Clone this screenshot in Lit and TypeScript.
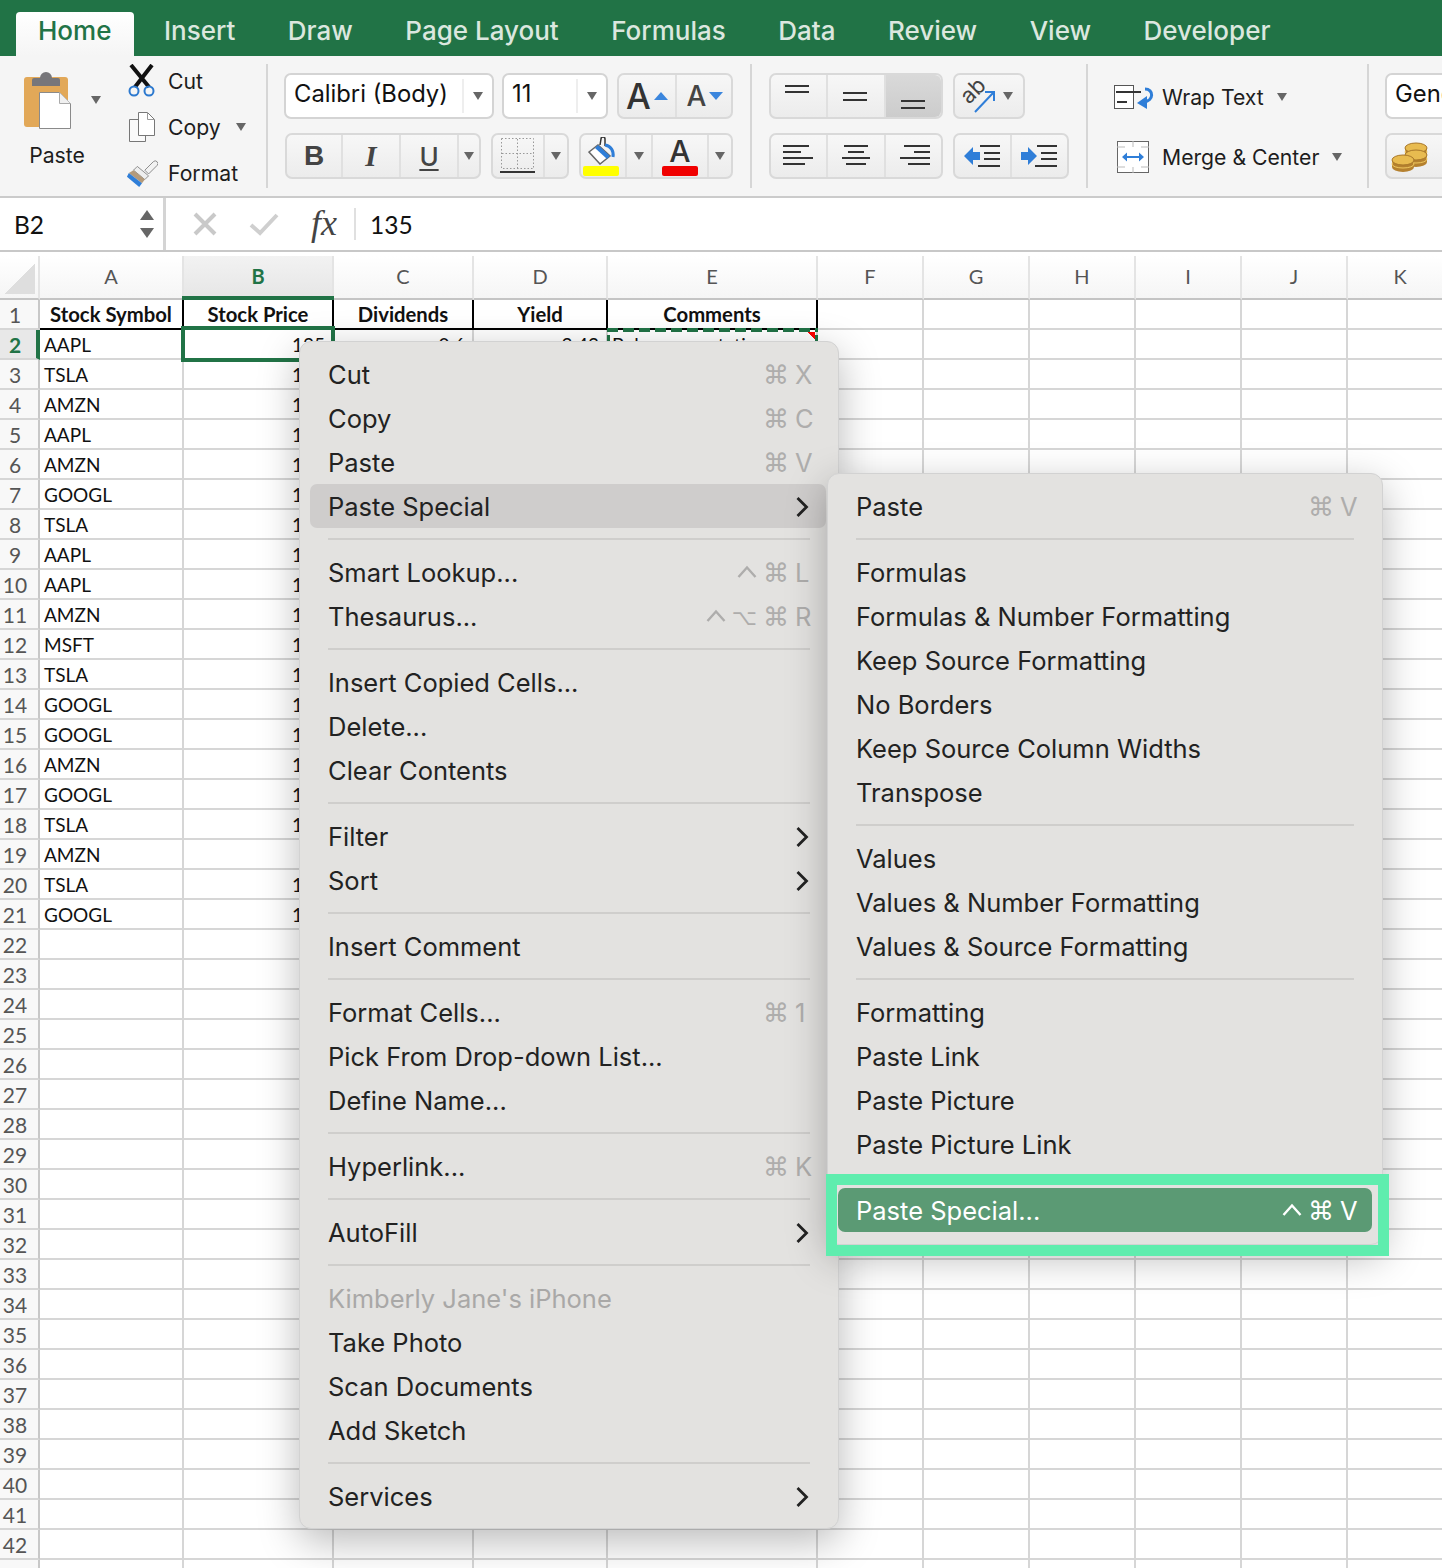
import { LitElement, html, css, svg } from "lit";
import { customElement } from "lit/decorators.js";

type Item = { t?: string; k?: string[]; arrow?: boolean; hover?: boolean; dis?: boolean; sel?: boolean; sep?: boolean };

const SEP: Item = { sep: true };

const mainMenu: Item[] = [
  { t: "Cut", k: ["⌘", "X"] },
  { t: "Copy", k: ["⌘", "C"] },
  { t: "Paste", k: ["⌘", "V"] },
  { t: "Paste Special", arrow: true, hover: true },
  SEP,
  { t: "Smart Lookup...", k: ["^", "⌘", "L"] },
  { t: "Thesaurus...", k: ["^", "⌥", "⌘", "R"] },
  SEP,
  { t: "Insert Copied Cells..." },
  { t: "Delete..." },
  { t: "Clear Contents" },
  SEP,
  { t: "Filter", arrow: true },
  { t: "Sort", arrow: true },
  SEP,
  { t: "Insert Comment" },
  SEP,
  { t: "Format Cells...", k: ["⌘", "1"] },
  { t: "Pick From Drop-down List..." },
  { t: "Define Name..." },
  SEP,
  { t: "Hyperlink...", k: ["⌘", "K"] },
  SEP,
  { t: "AutoFill", arrow: true },
  SEP,
  { t: "Kimberly Jane's iPhone", dis: true },
  { t: "Take Photo" },
  { t: "Scan Documents" },
  { t: "Add Sketch" },
  SEP,
  { t: "Services", arrow: true },
];

const subMenu: Item[] = [
  { t: "Paste", k: ["⌘", "V"] },
  SEP,
  { t: "Formulas" },
  { t: "Formulas & Number Formatting" },
  { t: "Keep Source Formatting" },
  { t: "No Borders" },
  { t: "Keep Source Column Widths" },
  { t: "Transpose" },
  SEP,
  { t: "Values" },
  { t: "Values & Number Formatting" },
  { t: "Values & Source Formatting" },
  SEP,
  { t: "Formatting" },
  { t: "Paste Link" },
  { t: "Paste Picture" },
  { t: "Paste Picture Link" },
  SEP,
  { t: "Paste Special...", k: ["^", "⌘", "V"], sel: true },
];

const symbols = ["AAPL", "TSLA", "AMZN", "AAPL", "AMZN", "GOOGL", "TSLA", "AAPL", "AAPL", "AMZN", "MSFT", "TSLA", "GOOGL", "GOOGL", "AMZN", "GOOGL", "TSLA", "AMZN", "TSLA", "GOOGL"];
const prices = ["135", "148", "112", "126", "131", "154", "119", "142", "137", "128", "116", "151", "133", "145", "122", "139", "127", "", "143", "118"];
const tabs = ["Home", "Insert", "Draw", "Page Layout", "Formulas", "Data", "Review", "View", "Developer"];
const cols = ["A", "B", "C", "D", "E", "F", "G", "H", "I", "J", "K"];
const heads = ["Stock Symbol", "Stock Price", "Dividends", "Yield", "Comments"];

const lines = (ys: number[][]) => html`<svg width="36" height="30" viewBox="0 0 36 30">
  ${ys.map(([x1, x2, y]) => svg`<rect x=${x1} y=${y} width=${x2 - x1} height="2" fill="#333"></rect>`)}
</svg>`;

const pasteIcon = html`<svg width="48" height="60" viewBox="0 0 48 60">
  <rect x="0" y="7" width="44" height="50" rx="3" fill="#e2a858"></rect>
  <path d="M8 16 v-6 a2 2 0 0 1 2 -2 h6 a6 6 0 0 1 12 0 h6 a2 2 0 0 1 2 2 v6z" fill="#77767a"></path>
  <path d="M15.500 22.500 h20 l11 11 v25 h-31z" fill="#fff" stroke="#8a8a8a"></path>
  <path d="M35.500 22.500 v11 h11" fill="#f0f0f0" stroke="#aaa"></path>
</svg>`;
const scissors = html`<svg width="30" height="34" viewBox="0 0 30 34">
  <path d="M4 1 L22 23 M25 1 L8 23" stroke="#111" stroke-width="4" fill="none"></path>
  <circle cx="7" cy="27" r="4.500" fill="none" stroke="#2c79cf" stroke-width="2"></circle>
  <circle cx="22" cy="27" r="4.500" fill="none" stroke="#2c79cf" stroke-width="2"></circle>
</svg>`;
const copyIcon = html`<svg width="28" height="32" viewBox="0 0 28 32">
  <path d="M1.500 8.500 h11 l5 5 v17 h-16z" fill="#fafafa" stroke="#777"></path>
  <path d="M10.500 1.500 h9 l7 7 v16 h-16z" fill="#fff" stroke="#777"></path>
  <path d="M19.500 1.500 v7 h7" fill="none" stroke="#999"></path>
</svg>`;
const brush = html`<svg width="34" height="30" viewBox="0 0 34 30">
  <path d="M20 12 L29 3 a2.500 2.500 0 0 1 4 4 L24 16z" fill="#f2f2f2" stroke="#888"></path>
  <path d="M12 8 L24 18 L20 22 L8 12z" fill="#eee" stroke="#888"></path>
  <path d="M8 12 L20 22 L17 26 L3 15z" fill="#b39a7b"></path>
  <path d="M3 15 L17 26 L14 30 L1 19 z" fill="#2f7ed8"></path>
</svg>`;
const bordersIcon = html`<svg width="36" height="38" viewBox="0 0 36 38">
  <g stroke="#999" stroke-width="1" stroke-dasharray="1.500 2" fill="none">
    <rect x="1.500" y="1.500" width="32" height="30"></rect>
    <path d="M17.500 2 v30 M2 16.500 h32"></path>
  </g>
  <rect x="0" y="34" width="35" height="2" fill="#333"></rect>
</svg>`;
const bucket = html`<svg width="30" height="28" viewBox="0 0 30 28">
  <path d="M3 15 L12 8 L24 19 L14 27z" fill="#fff" stroke="#666" stroke-width="1.500"></path>
  <path d="M12 8 L24 19 L21 22 L9 11z" fill="#2f7ed8"></path>
  <path d="M14 8 L15 2 a2 2 0 0 1 4 0 L19 9" fill="none" stroke="#333" stroke-width="1.500"></path>
  <path d="M19 8 C25 9 28 14 27 20" fill="none" stroke="#2f7ed8" stroke-width="3"></path>
</svg>`;
const orient = html`<svg width="36" height="36" viewBox="0 0 36 36" style="overflow:visible">
  <text transform="translate(8 27) rotate(-45)" font-family="Inter, sans-serif" font-size="22" fill="#444">ab</text>
  <path d="M14 34 L32 15 M24 14 H33 V23" fill="none" stroke="#2f7ed8" stroke-width="2"></path>
</svg>`;
const wrapIcon = html`<svg width="42" height="28" viewBox="0 0 42 28">
  <rect x="0.500" y="2.500" width="19" height="23" fill="#fff" stroke="#555"></rect>
  <path d="M2 9 H27 M3 19 H13" stroke="#333" stroke-width="2" fill="none"></path>
  <path d="M31 6 C40 6 40 18 30 19" fill="none" stroke="#2f7ed8" stroke-width="3"></path>
  <path d="M33 13 V26 L23 20z" fill="#2f7ed8"></path>
</svg>`;
const mergeIcon = html`<svg width="32" height="32" viewBox="0 0 32 32">
  <rect x="0.500" y="0.500" width="31" height="31" fill="#fff" stroke="#666"></rect>
  <path d="M16 0 V6 M16 26 V32 M0 6 H8 M24 6 H32 M0 26 H8 M24 26 H32" stroke="#bbb" fill="none"></path>
  <path d="M7 16 H25" stroke="#2f7ed8" stroke-width="2"></path>
  <path d="M5 16 L10 11.500 V20.500z M27 16 L22 11.500 V20.500z" fill="#2f7ed8"></path>
</svg>`;
const coin = (cx: number, cy: number) => svg`
  <path d="M${cx - 11} ${cy} v7 a11 5 0 0 0 22 0 v-7z" fill="#b5812f"></path>
  <ellipse cx=${cx} cy=${cy + 4} rx="11" ry="4" fill="none" stroke="#f0c860"></ellipse>
  <ellipse cx=${cx} cy=${cy} rx="11" ry="5" fill="#e8bb50" stroke="#a8772a"></ellipse>`;
const coins = html`<svg width="38" height="32" viewBox="0 0 38 32">
  ${coin(25, 6)}${coin(25, 13)}${coin(12, 18)}
</svg>`;
const xIcon = html`<svg width="24" height="24" viewBox="0 0 24 24"><path d="M2 2 L22 22 M22 2 L2 22" stroke="#c9c9c9" stroke-width="4"></path></svg>`;
const checkIcon = html`<svg width="30" height="24" viewBox="0 0 30 24"><path d="M2 13 L11 21 L28 3" stroke="#cfcfcf" stroke-width="4" fill="none"></path></svg>`;
const chevron = html`<svg class="chev" width="14" height="22" viewBox="0 0 14 22"><path d="M2.500 2 L11.500 11 L2.500 20" fill="none" stroke="currentColor" stroke-width="2.800"></path></svg>`;
const ctrlKey = html`<svg width="20" height="14" viewBox="0 0 20 14"><path d="M1.500 12 L10 2.500 L18.500 12" fill="none" stroke="currentColor" stroke-width="2.400"></path></svg>`;

@customElement("app-root")
export class AppRoot extends LitElement {
  static styles = css`
    :host {
      display: block;
      position: relative;
      width: 1442px;
      height: 1568px;
      overflow: hidden;
      background: #fff;
      font-family: Inter, "Liberation Sans", sans-serif;
      color: #1d1d1d;
    }
    .tabs {
      display: flex;
      align-items: flex-end;
      gap: 7.500px;
      height: 56px;
      padding-left: 16px;
      box-sizing: border-box;
      background: #217346;
    }
    .tab {
      height: 44px;
      padding: 0 23px 0 22px;
      line-height: 38px;
      font-size: 26px;
      font-weight: 500;
      color: #dbe7df;
    }
    .tab.on {
      background: linear-gradient(#fff, #f5f5f5);
      color: #217346;
      border-radius: 4px 4px 0 0;
    }
    .ribbon {
      display: flex;
      height: 142px;
      box-sizing: border-box;
      padding-top: 8px;
      background: #f5f5f5;
      border-bottom: 2px solid #cbcbcb;
      overflow: hidden;
      font-size: 21.200px;
    }
    .group {
      flex: none;
      height: 124px;
      box-sizing: border-box;
      border-right: 2px solid #d6d6d6;
      padding-top: 9px;
      display: flex;
      flex-direction: column;
      gap: 14px;
    }
    .row {
      display: flex;
      gap: 9px;
      height: 46px;
      flex: none;
    }
    .clip {
      width: 268px;
      flex-direction: row;
      gap: 0;
      padding-top: 0;
    }
    .paste {
      width: 126px;
      flex: none;
    }
    .paste-icon {
      display: flex;
      align-items: center;
      gap: 19px;
      padding: 6px 0 0 24px;
    }
    .paste-label {
      width: 114px;
      text-align: center;
      margin-top: 12px;
    }
    .clip-list {
      display: flex;
      flex-direction: column;
      margin-top: -6px;
    }
    .clip-item {
      display: flex;
      align-items: center;
      height: 46px;
      flex: none;
    }
    .clip-item .ic {
      width: 42px;
      display: flex;
      justify-content: center;
      padding-right: 10px;
      box-sizing: border-box;
    }
    .caret {
      display: inline-block;
      width: 0;
      height: 0;
      flex: none;
      border-left: 5.500px solid transparent;
      border-right: 5.500px solid transparent;
      border-top: 8px solid #666;
    }
    .select {
      display: flex;
      align-items: center;
      height: 46px;
      box-sizing: border-box;
      background: #fff;
      border: 2px solid #d4d4d4;
      border-radius: 7px;
      font-size: 23.800px;
      padding-left: 8px;
      color: #111;
      white-space: nowrap;
    }
    .select .txt {
      flex: 1;
      padding-bottom: 5px;
    }
    .select .drop {
      width: 28px;
      height: 34px;
      border-left: 2px solid #eee;
      display: flex;
      align-items: center;
      justify-content: center;
    }
    .btns {
      display: flex;
      height: 46px;
      box-sizing: border-box;
      border: 2px solid #d9d9d9;
      border-radius: 7px;
      background: linear-gradient(#f7f7f7, #ececec);
    }
    .btn {
      display: flex;
      align-items: center;
      justify-content: center;
      box-sizing: border-box;
      border-right: 2px solid #e0e0e0;
      flex: none;
      color: #444;
    }
    .btn:last-child {
      border-right: 0;
    }
    .btn.pressed {
      background: linear-gradient(#d9d9d9, #cccccc);
    }
    .font { width: 484px; padding-left: 16px; }
    .align { width: 336px; padding-left: 17px; }
    .wrap { width: 281px; padding-left: 0; gap: 0; padding-top: 3px; }
    .wrap-row {
      display: flex;
      align-items: center;
      height: 60px;
      flex: none;
    }
    .wrap-row .ic {
      width: 74px;
      display: flex;
      justify-content: flex-end;
      padding-right: 6px;
      box-sizing: border-box;
    }
    .wrap-row .caret { margin-left: 13px; }
    .num { padding-left: 16px; border: 0; width: 120px; }
    .num .select .txt { flex: none; }
    .coins-btn { width: 54px; padding: 3px 8px 0 0; }
    .bold { font: 700 28px "Liberation Sans", sans-serif; }
    .ital { font: italic 700 29px "Liberation Serif", serif; }
    .under { font: 500 26px Inter, sans-serif; text-decoration: underline; text-underline-offset: 3px; }
    .big-a { font-size: 35px; font-weight: 500; color: #333; }
    .small-a { font-size: 28px; font-weight: 500; color: #444; }
    .up, .down {
      width: 0;
      height: 0;
      border-left: 7.500px solid transparent;
      border-right: 7.500px solid transparent;
      margin-left: 3px;
    }
    .up { border-bottom: 8px solid #3b86dd; }
    .down { border-top: 8px solid #3b86dd; }
    .swatch-wrap {
      display: flex;
      flex-direction: column;
      align-items: center;
      gap: 1px;
    }
    .swatch {
      width: 36px;
      height: 10px;
      border-radius: 2px;
    }
    .a-col {
      font-size: 30px;
      line-height: 28px;
      font-weight: 500;
      color: #333;
    }
    .formula {
      display: flex;
      align-items: center;
      height: 54px;
      box-sizing: border-box;
      border-bottom: 2px solid #c8c8c8;
      background: #fff;
      font-family: Lato, sans-serif;
      font-size: 24.500px;
      color: #111;
    }
    .name {
      display: flex;
      align-items: center;
      justify-content: space-between;
      width: 166px;
      height: 52px;
      box-sizing: border-box;
      padding: 0 9px 0 14px;
      border-right: 3px solid #d4d4d4;
    }
    .stepper {
      display: flex;
      flex-direction: column;
      gap: 8px;
    }
    .stepper i {
      width: 0;
      height: 0;
      border-left: 7px solid transparent;
      border-right: 7px solid transparent;
    }
    .stepper i:first-child { border-bottom: 10px solid #666; }
    .stepper i:last-child { border-top: 10px solid #666; }
    .fbtn {
      display: flex;
      justify-content: center;
      align-items: center;
      flex: none;
    }
    .fx {
      font: italic 36px "Liberation Serif", serif;
      color: #444;
      width: 72px;
      height: 32px;
      line-height: 30px;
      text-align: center;
      border-right: 2px solid #e0e0e0;
      margin-right: 14px;
      box-sizing: border-box;
      padding-left: 10px;
    }
    .sheet {
      margin-top: 4px;
      display: grid;
      grid-template-columns: 40px 144px 150px 140px 134px 210px repeat(6, 106px);
      grid-template-rows: 44px;
      grid-auto-rows: 30px;
      font-family: Lato, sans-serif;
      font-size: 19px;
      color: #111;
    }
    .cell {
      box-sizing: border-box;
      border-right: 2px solid #d6d6d6;
      border-bottom: 2px solid #d6d6d6;
      line-height: 29px;
      white-space: nowrap;
      overflow: hidden;
      padding: 0 4px;
    }
    .right { text-align: right; padding-right: 7px; }
    .ch {
      line-height: 40px;
      background: linear-gradient(#fff, #f5f5f5);
      text-align: center;
      color: #555;
      font-size: 20px;
      border-bottom-color: #c4c4c4;
      border-right-color: #e4e4e4;
    }
    .ch.active {
      background: linear-gradient(#f2f2f2, #e6e6e6);
      color: #217346;
      font-weight: 700;
    }
    .rh {
      text-align: center;
      padding: 0 8px 0 0;
      background: #f8f8f8;
      color: #555;
      font-size: 21px;
      border-right-color: #c8c8c8;
    }
    .rh.active {
      background: #e8e8e8;
      color: #217346;
      font-weight: 700;
      padding-right: 6px;
      border-right: 4px solid #217346;
    }
    .hd {
      text-align: center;
      font-weight: 700;
      font-size: 20.300px;
      border-right-color: #000;
      border-bottom-color: #000;
    }
    .corner {
      position: absolute;
      left: 5px;
      top: 264px;
      width: 30px;
      height: 30px;
      background: linear-gradient(135deg, transparent 50%, #dedede 50%);
      z-index: 2;
    }
    .sel {
      position: absolute;
      left: 181px;
      top: 326px;
      width: 154px;
      height: 36px;
      box-sizing: border-box;
      border: 4px solid #217346;
      z-index: 2;
    }
    .sel-top {
      position: absolute;
      left: 182px;
      top: 296px;
      width: 152px;
      height: 4px;
      background: #217346;
      z-index: 2;
    }
    .ants {
      position: absolute;
      left: 607px;
      top: 328px;
      width: 211px;
      height: 34px;
      z-index: 2;
      background:
        repeating-linear-gradient(90deg, #217346 0 11px, transparent 11px 16px) top / 100% 4px no-repeat,
        repeating-linear-gradient(0deg, #217346 0 11px, transparent 11px 16px) left / 3px 100% no-repeat,
        repeating-linear-gradient(0deg, #217346 0 11px, transparent 11px 16px) right / 3px 100% no-repeat;
    }
    .comment {
      position: absolute;
      left: 807px;
      top: 332px;
      width: 8px;
      height: 8px;
      background: linear-gradient(45deg, transparent 50%, #f00 50%);
      z-index: 2;
    }
    .menu {
      position: absolute;
      box-sizing: border-box;
      padding: 10px 0;
      background: #e3e2e0;
      border-radius: 12px;
      border: 1px solid #d2d2d2;
      box-shadow: 0 12px 40px rgba(0, 0, 0, 0.28);
      font-size: 25.500px;
      color: #222;
      z-index: 5;
    }
    .main {
      left: 299px;
      top: 341px;
      width: 540px;
      height: 1188px;
    }
    .main .item {
      margin-right: 12px;
      padding-right: 14px;
    }
    .sub {
      left: 827px;
      top: 473px;
      width: 556px;
      height: 772px;
      z-index: 6;
    }
    .item {
      display: flex;
      align-items: center;
      justify-content: space-between;
      height: 44px;
      box-sizing: border-box;
      margin: 0 10px;
      padding: 0 15px 0 18px;
      white-space: nowrap;
      border-radius: 7px;
    }
    .item.hover {
      background: #cfcdcc;
    }
    .item.dis {
      color: #a9a8a7;
    }
    .item.sel-item {
      background: #5b9a74;
      color: #fff;
    }
    .chev {
      color: #222;
      margin: 2px 3px 0 0;
    }
    .sep {
      height: 2px;
      margin: 10px 28px;
      background: #cfcecc;
    }
    .keys {
      display: flex;
      align-items: center;
      gap: 6px;
      color: #aeadac;
    }
    .sel-item .keys {
      color: #fff;
    }
    .glyph {
      font-family: "DejaVu Sans", sans-serif;
      font-size: 26px;
      padding-top: 2px;
    }
    .glyph.opt {
      font-size: 22px;
    }
    .kl {
      width: 17px;
    }
    .outline {
      position: absolute;
      left: 826px;
      top: 1174px;
      width: 563px;
      height: 82px;
      box-sizing: border-box;
      border: 11px solid #5fedae;
      z-index: 7;
    }
  `;

  renderKey(k: string) {
    if (k === "^") return ctrlKey;
    if (k === "⌘") return html`<span class="glyph">${k}</span>`;
    if (k === "⌥") return html`<span class="glyph opt">${k}</span>`;
    return html`<span class="kl">${k}</span>`;
  }

  renderMenuItem(it: Item) {
    if (it.sep) return html`<div class="sep"></div>`;
    const cls = ["item", it.hover ? "hover" : "", it.dis ? "dis" : "", it.sel ? "sel-item" : ""].join(" ");
    return html`<div class=${cls}>
      <span>${it.t}</span>
      ${it.k ? html`<span class="keys">${it.k.map((k) => this.renderKey(k))}</span>` : ""}
      ${it.arrow ? chevron : ""}
    </div>`;
  }

  renderRibbon() {
    return html`<div class="ribbon">
      <div class="group clip">
        <div class="paste">
          <div class="paste-icon">${pasteIcon}<span class="caret"></span></div>
          <div class="paste-label">Paste</div>
        </div>
        <div class="clip-list">
          <div class="clip-item"><span class="ic">${scissors}</span>Cut</div>
          <div class="clip-item"><span class="ic">${copyIcon}</span>Copy<span class="caret" style="margin-left:15px"></span></div>
          <div class="clip-item"><span class="ic">${brush}</span>Format</div>
        </div>
      </div>

      <div class="group font">
        <div class="row">
          <div class="select" style="width:210px"><span class="txt">Calibri (Body)</span><span class="drop"><span class="caret"></span></span></div>
          <div class="select" style="width:106px;margin-left:-1px"><span class="txt">11</span><span class="drop"><span class="caret"></span></span></div>
          <div class="btns" style="width:116px">
            <div class="btn" style="width:58px"><span class="big-a">A</span><span class="up"></span></div>
            <div class="btn" style="width:56px"><span class="small-a">A</span><span class="down"></span></div>
          </div>
        </div>
        <div class="row" style="gap:10px;margin-left:1px">
          <div class="btns" style="width:196px">
            <div class="btn" style="width:56px"><span class="bold">B</span></div>
            <div class="btn" style="width:58px"><span class="ital">I</span></div>
            <div class="btn" style="width:58px"><span class="under">U</span></div>
            <div class="btn" style="flex:1"><span class="caret"></span></div>
          </div>
          <div class="btns" style="width:78px">
            <div class="btn" style="width:52px">${bordersIcon}</div>
            <div class="btn" style="flex:1"><span class="caret"></span></div>
          </div>
          <div class="btns" style="width:154px">
            <div class="btn" style="width:46px;padding-right:4px">
              <div class="swatch-wrap">${bucket}<div class="swatch" style="background:#ffff00"></div></div>
            </div>
            <div class="btn" style="width:26px"><span class="caret"></span></div>
            <div class="btn" style="width:56px">
              <div class="swatch-wrap"><span class="a-col">A</span><div class="swatch" style="background:#f00000"></div></div>
            </div>
            <div class="btn" style="flex:1"><span class="caret"></span></div>
          </div>
        </div>
      </div>

      <div class="group align">
        <div class="row" style="gap:10px">
          <div class="btns" style="width:174px">
            <div class="btn" style="width:57px;align-items:flex-start;padding-top:8px">${lines([[4, 28, 2], [4, 28, 8]])}</div>
            <div class="btn" style="width:58px">${lines([[5, 29, 11], [5, 29, 18]])}</div>
            <div class="btn pressed" style="flex:1;border-radius:0 6px 6px 0">${lines([[5, 29, 19], [5, 29, 26]])}</div>
          </div>
          <div class="btns" style="width:72px">
            <div class="btn" style="flex:1;border:0;gap:6px;padding-right:4px">${orient}<span class="caret"></span></div>
          </div>
        </div>
        <div class="row" style="gap:10px">
          <div class="btns" style="width:174px">
            <div class="btn" style="width:57px">${lines([[2, 28, 4], [2, 20, 10], [2, 32, 16], [2, 24, 22]])}</div>
            <div class="btn" style="width:58px">${lines([[6, 30, 4], [10, 26, 10], [4, 32, 16], [8, 28, 22]])}</div>
            <div class="btn" style="flex:1">${lines([[8, 34, 4], [18, 34, 10], [4, 34, 16], [12, 34, 22]])}</div>
          </div>
          <div class="btns" style="width:116px">
            <div class="btn" style="width:57px">
              <svg width="38" height="22" viewBox="0 0 38 22"><path d="M0 11 L9 2 V7 H16 V15 H9 V20z" fill="#2f7ed8"></path><path d="M16 1 H36 M20 8 H36 M20 14 H36 M14 21 H36" stroke="#333" stroke-width="2"></path></svg>
            </div>
            <div class="btn" style="flex:1">
              <svg width="38" height="22" viewBox="0 0 38 22"><path d="M16 11 L7 2 V7 H0 V15 H7 V20z" fill="#2f7ed8"></path><path d="M16 1 H36 M20 8 H36 M20 14 H36 M14 21 H36" stroke="#333" stroke-width="2"></path></svg>
            </div>
          </div>
        </div>
      </div>

      <div class="group wrap">
        <div class="wrap-row"><span class="ic">${wrapIcon}</span>Wrap Text<span class="caret"></span></div>
        <div class="wrap-row"><span class="ic" style="padding-right:13px">${mergeIcon}</span>Merge &amp; Center<span class="caret"></span></div>
      </div>

      <div class="group num">
        <div class="row"><div class="select" style="width:150px"><span class="txt">General</span></div></div>
        <div class="row"><div class="btns" style="width:150px"><div class="btn coins-btn">${coins}</div></div></div>
      </div>
    </div>`;
  }

  renderSheet() {
    const cells: unknown[] = [];
    cells.push(html`<div class="cell ch"></div>`);
    cols.forEach((c) => cells.push(html`<div class="cell ch ${c === "B" ? "active" : ""}">${c}</div>`));
    for (let r = 1; r <= 43; r++) {
      cells.push(html`<div class="cell rh ${r === 2 ? "active" : ""}">${r}</div>`);
      for (let c = 0; c < cols.length; c++) {
        let text = "";
        let cls = "cell";
        if (r === 1 && c < heads.length) {
          text = heads[c];
          cls += " hd";
        } else if (r >= 2 && r <= 21) {
          if (c === 0) text = symbols[r - 2];
          if (c === 1) {
            text = prices[r - 2];
            cls += " right";
          }
          if (r === 2 && c === 2) {
            text = "0.6";
            cls += " right";
          }
          if (r === 2 && c === 3) {
            text = "2.42";
            cls += " right";
          }
          if (r === 2 && c === 4) text = "Below expectations";
        }
        cells.push(html`<div class=${cls}>${text}</div>`);
      }
    }
    return html`<div class="sheet">${cells}</div>`;
  }

  render() {
    return html`
      <div class="tabs">${tabs.map((t, i) => html`<div class="tab ${i === 0 ? "on" : ""}">${t}</div>`)}</div>
      ${this.renderRibbon()}
      <div class="formula">
        <div class="name">B2<span class="stepper"><i></i><i></i></span></div>
        <div class="fbtn" style="width:78px">${xIcon}</div>
        <div class="fbtn" style="width:40px">${checkIcon}</div>
        <div class="fx">fx</div>
        <div>135</div>
      </div>
      ${this.renderSheet()}
      <div class="corner"></div>
      <div class="sel-top"></div>
      <div class="sel"></div>
      <div class="ants"></div>
      <div class="comment"></div>
      <div class="menu main">${mainMenu.map((m) => this.renderMenuItem(m))}</div>
      <div class="menu sub">${subMenu.map((m) => this.renderMenuItem(m))}</div>
      <div class="outline"></div>
    `;
  }
}
